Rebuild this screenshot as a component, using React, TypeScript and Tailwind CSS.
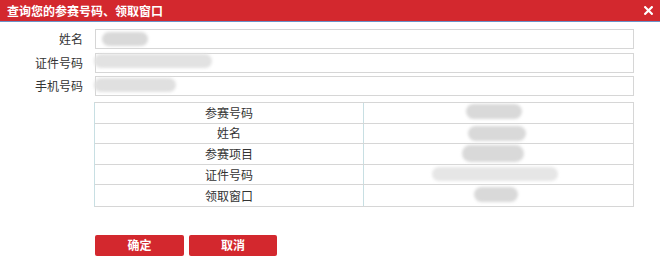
import React from "react";

const font = { fontFamily: '"Noto Sans CJK SC", "Noto Sans", sans-serif' };

function Blob({ className }: { className: string }) {
  return <div className={`absolute rounded-full bg-[#d9d9d9] blur-[1.5px] ${className}`} />;
}

const rows = ["参赛号码", "姓名", "参赛项目", "证件号码", "领取窗口"];

export default function App() {
  return (
    <div className="w-[660px] h-[260px] bg-white text-[12px] text-[#333]" style={font}>
      <div className="h-[22px] bg-[#d3282e] border-b border-[#6a93c9] flex items-center justify-between pl-[7px] pr-[6px]">
        <span className="text-white font-bold text-[12px] leading-none">查询您的参赛号码、领取窗口</span>
        <svg width="9" height="9" viewBox="0 0 9 9" className="mr-[1px]">
          <path d="M1.2 1.2 L7.8 7.8 M7.8 1.2 L1.2 7.8" stroke="#fff" strokeWidth="2.2" strokeLinecap="square" />
        </svg>
      </div>

      <div className="flex flex-col gap-[3.5px] mt-[7px]">
        {[
          { label: "姓名", blob: "left-[6px] top-[2px] w-[46px] h-[14px]" },
          { label: "证件号码", blob: "left-[-2px] top-[0px] w-[118px] h-[14px] bg-[#e2e2e2]" },
          { label: "手机号码", blob: "left-[-2px] top-[1px] w-[82px] h-[14px] bg-[#e0e0e0]" },
        ].map((r) => (
          <div key={r.label} className="flex items-center h-[20px]">
            <div className="w-[83px] text-right leading-none">{r.label}</div>
            <div className="relative ml-[12px] w-[539px] h-[20px] border border-[#d6d6d6] bg-white">
              <Blob className={r.blob} />
            </div>
          </div>
        ))}
      </div>

      <div className="ml-[94px] mt-[6px] w-[540px] border border-[#d6d6d6] border-l-[#c8dfe3]">
        {rows.map((r, i) => (
          <div
            key={r}
            className={`flex h-[20.6px] ${i < rows.length - 1 ? "border-b border-[#d6d6d6]" : ""}`}
          >
            <div className="w-[269px] border-r border-[#c8dfe3] flex items-center justify-center leading-none">
              {r}
            </div>
            <div className="relative flex-1">
              {i === 0 && <Blob className="left-[102px] top-[1px] w-[56px] h-[15px]" />}
              {i === 1 && <Blob className="left-[104px] top-[2px] w-[58px] h-[15px]" />}
              {i === 2 && <Blob className="left-[98px] top-[1px] w-[62px] h-[17px]" />}
              {i === 3 && <Blob className="left-[68px] top-[2px] w-[126px] h-[14px] bg-[#e6e6e6]" />}
              {i === 4 && <Blob className="left-[110px] top-[2px] w-[44px] h-[15px]" />}
            </div>
          </div>
        ))}
      </div>

      <div className="ml-[95px] mt-[28px] flex gap-[5px]">
        <button className="w-[89px] h-[21px] rounded-[2px] bg-[#d3282e] text-white font-bold text-[12px] leading-none flex items-center justify-center">
          确定
        </button>
        <button className="w-[88px] h-[21px] rounded-[2px] bg-[#d3282e] text-white font-bold text-[12px] leading-none flex items-center justify-center">
          取消
        </button>
      </div>
    </div>
  );
}
